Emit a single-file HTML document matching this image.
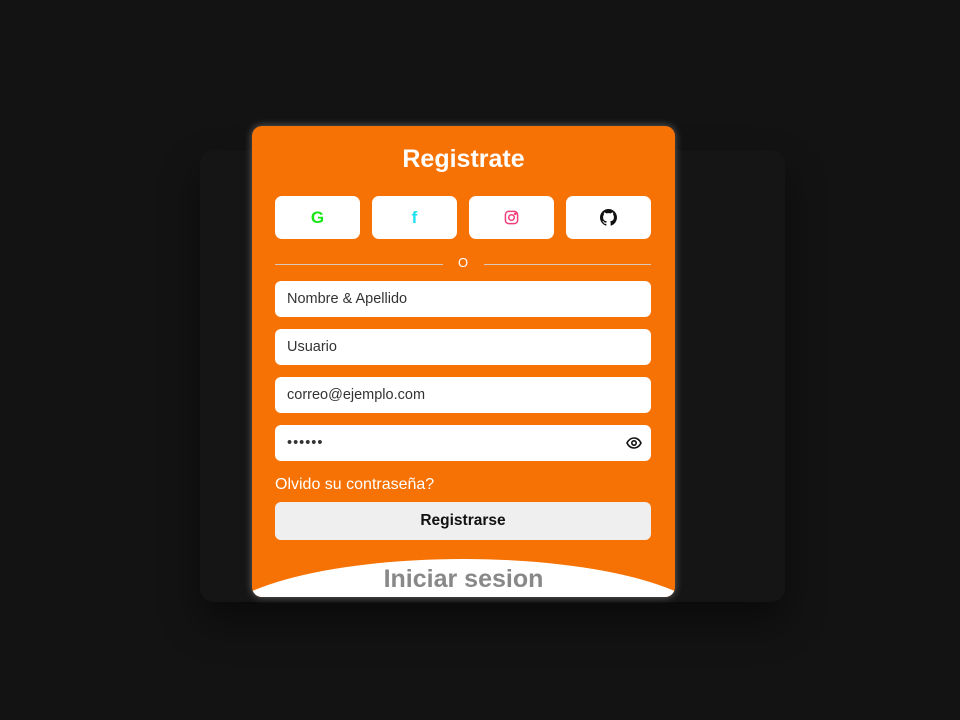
<!DOCTYPE html>
<html><head><meta charset="utf-8"><style>
*{margin:0;padding:0;box-sizing:border-box}
body{width:960px;height:720px;background:#131313;position:relative;overflow:hidden;font-family:"Liberation Sans",sans-serif}
.back{position:absolute;left:200px;top:150px;width:585px;height:452px;background:#151515;border-radius:14px;box-shadow:0 20px 40px rgba(0,0,0,.45)}
.card{position:absolute;left:252px;top:126px;width:423px;height:471px;background:#f77204;border-radius:10px;overflow:hidden;box-shadow:0 0 8px rgba(255,255,255,.35)}
h1{position:absolute;top:19px;width:100%;text-align:center;color:#fff;font-size:25px;font-weight:bold}
.soc{position:absolute;top:70px;width:85px;height:43px;background:#fff;border-radius:7px;display:flex;align-items:center;justify-content:center}
.div{position:absolute;top:138px;height:1px;background:#d9c8b8}
.o{position:absolute;left:205px;top:129px;width:12px;text-align:center;color:#fff;font-size:13px}
.in{position:absolute;left:23px;width:376px;height:36px;background:#fff;border-radius:6px;padding-left:12px;line-height:36px;color:#333;font-size:14.5px}
.fg{position:absolute;left:23px;top:350px;color:#fff;font-size:16px}
.btn{position:absolute;left:23px;top:376px;width:376px;height:38px;background:#efefef;border-radius:6px;text-align:center;line-height:38px;font-weight:bold;font-size:15.5px;color:#111}
.curve{position:absolute;left:-40px;top:433px;width:503px;height:160px;background:#fff;border-radius:50%/70px}
.ini{position:absolute;top:439px;width:100%;text-align:center;color:#888;font-size:25px;font-weight:bold}
</style></head><body>
<div class="back"></div>
<div class="card">
<h1>Registrate</h1>
<div class="soc" style="left:23px"><span style="color:#19e619;font-weight:bold;font-size:17px">G</span></div>
<div class="soc" style="left:120px"><span style="color:#1ee0f0;font-weight:bold;font-size:17px">f</span></div>
<div class="soc" style="left:217px"><svg width="15" height="15" viewBox="0 0 16 16" fill="none" stroke="#f0407a" stroke-width="1.6"><rect x="1.5" y="1.5" width="13" height="13" rx="3.5"/><circle cx="8" cy="8" r="3"/><circle cx="12" cy="4" r=".6" fill="#f0407a"/></svg></div>
<div class="soc" style="left:314px"><svg width="17" height="17" viewBox="0 0 16 16"><path fill="#111" d="M8 0C3.58 0 0 3.58 0 8c0 3.54 2.29 6.53 5.47 7.59.4.07.55-.17.55-.38v-1.33c-2.23.48-2.7-1.07-2.7-1.07-.36-.92-.89-1.17-.89-1.17-.73-.5.06-.49.06-.49.8.06 1.23.83 1.23.83.72 1.23 1.88.87 2.34.66.07-.52.28-.87.5-1.07-1.78-.2-3.64-.89-3.64-3.95 0-.87.31-1.59.82-2.15-.08-.2-.36-1.02.08-2.12 0 0 .67-.21 2.2.82a7.6 7.6 0 0 1 4 0c1.53-1.04 2.2-.82 2.2-.82.44 1.1.16 1.92.08 2.12.51.56.82 1.27.82 2.15 0 3.07-1.87 3.75-3.65 3.95.29.25.54.73.54 1.48v2.2c0 .21.15.46.55.38A8 8 0 0 0 16 8c0-4.42-3.58-8-8-8z"/></svg></div>
<div class="div" style="left:23px;width:168px"></div>
<div class="o">O</div>
<div class="div" style="left:232px;width:167px"></div>
<div class="in" style="top:155px">Nombre &amp; Apellido</div>
<div class="in" style="top:203px">Usuario</div>
<div class="in" style="top:251px">correo@ejemplo.com</div>
<div class="in" style="top:299px;letter-spacing:1px">••••••<svg style="position:absolute;right:9px;top:11px" width="16" height="14" viewBox="0 0 16 14" fill="none" stroke="#111" stroke-width="1.6"><path d="M1 7C3 3 5.5 2 8 2s5 1 7 5c-2 4-4.5 5-7 5S3 11 1 7z"/><circle cx="8" cy="7" r="2.2"/></svg></div>
<div class="fg">Olvido su contraseña?</div>
<div class="btn">Registrarse</div>
<div class="curve"></div>
<div class="ini">Iniciar sesion</div>
</div>
</body></html>
